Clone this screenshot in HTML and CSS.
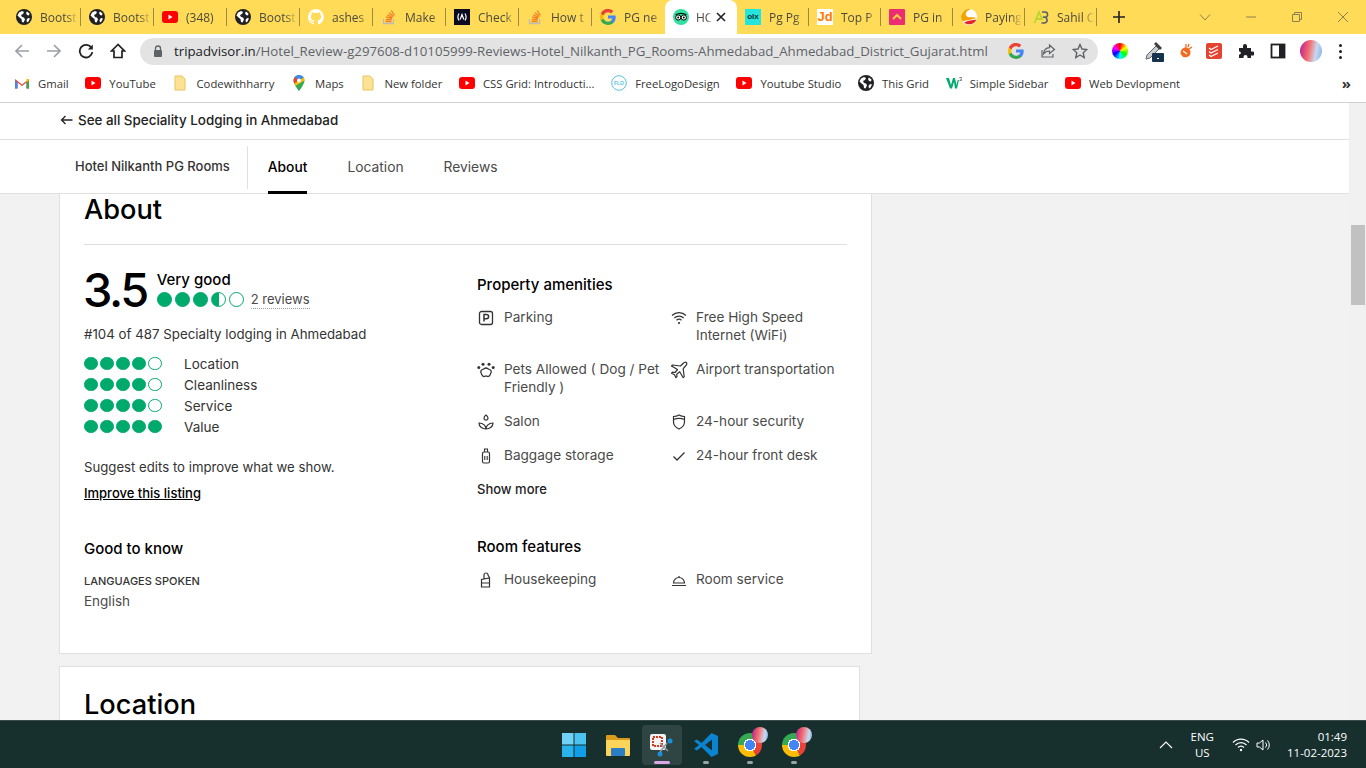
FILE: index.html
```html
<!DOCTYPE html>
<html lang="en">

<head>
    <meta charset="UTF-8">
    <meta name="viewport" content="width=device-width, initial-scale=1.0">
    <title>Hotel Nilkanth PG Rooms</title>
    <link rel="stylesheet" href="styles.css">
</head>

<body>
    <svg class="defs" width="0" height="0">
        <symbol id="globe" viewBox="0 0 16 16">
            <circle cx="8" cy="8" r="8" fill="#202124"/>
            <path d="M3 3.5l3-1.5 2 1-1 2-2 1 1 2 2 .5 1 2-1.500 3-1.500-.5-.5-3-2-1.500-2-2zM11 2.500l2.500 2-.5 2-2-.5-1-2zM12 9l2 .5-1.500 3-1.500 1-.5-2.500z" fill="#fff"/>
        </symbol>
        <symbol id="yt" viewBox="0 0 16 16">
            <rect y="2" width="16" height="12" rx="3" fill="#f00"/>
            <path d="M6.500 5.500v5l4-2.500z" fill="#fff"/>
        </symbol>
        <symbol id="gh" viewBox="0 0 16 16">
            <path d="M8 0a8 8 0 0 0-2.500 15.600c.4.100.5-.2.500-.4v-1.400c-2.200.5-2.700-1-2.700-1-.4-.9-.9-1.200-.9-1.200-.7-.5.100-.5.100-.5.800.1 1.200.8 1.200.8.700 1.200 1.900.9 2.300.7.100-.5.300-.9.500-1.100-1.800-.2-3.600-.9-3.600-4 0-.9.300-1.600.8-2.100-.1-.2-.4-1 .1-2.100 0 0 .7-.2 2.200.8a7.600 7.600 0 0 1 4 0c1.500-1 2.200-.8 2.200-.8.400 1.100.2 1.900.1 2.100.5.600.8 1.300.8 2.100 0 3.100-1.900 3.700-3.700 3.900.3.300.6.800.6 1.500v2.200c0 .2.100.5.600.4A8 8 0 0 0 8 0z" fill="#fff"/>
        </symbol>
        <symbol id="so" viewBox="0 0 16 16">
            <path d="M2.500 10v4.500h10V10" fill="none" stroke="#bcbbbb" stroke-width="1.300"/>
            <path d="M4.500 12.500h6M4.700 10.300l6 .6M5.200 8l5.800 1.500M6.300 5.800l5.200 2.800M8 3.700l4.400 3.900M10.200 1.500l3.200 4.800" stroke="#f48024" stroke-width="1.300" fill="none"/>
        </symbol>
        <symbol id="fcc" viewBox="0 0 16 16">
            <rect width="16" height="16" fill="#0a0a23"/>
            <path d="M5 4.500Q2.800 8 5 11.500M11 4.500Q13.200 8 11 11.500M6.200 10.500L8 5.500l1.800 5" fill="none" stroke="#fff" stroke-width="1.200"/>
        </symbol>
        <symbol id="google" viewBox="0 0 16 16">
            <path d="M15.700 8.200c0-.6-.1-1.100-.2-1.600H8v3h4.300c-.2 1-.8 1.800-1.600 2.400v2h2.600c1.500-1.400 2.400-3.400 2.400-5.800z" fill="#4285f4"/>
            <path d="M8 16c2.200 0 4-.7 5.300-2l-2.600-2c-.7.500-1.600.8-2.700.8-2.100 0-3.900-1.400-4.500-3.300H.8v2.100A8 8 0 0 0 8 16z" fill="#34a853"/>
            <path d="M3.500 9.500a4.800 4.800 0 0 1 0-3V4.400H.8a8 8 0 0 0 0 7.200z" fill="#fbbc05"/>
            <path d="M8 3.200c1.200 0 2.200.4 3.100 1.200l2.300-2.300A8 8 0 0 0 .8 4.400l2.700 2.100C4.100 4.600 5.900 3.200 8 3.200z" fill="#ea4335"/>
        </symbol>
        <symbol id="tripadvisor" viewBox="0 0 16 16">
            <circle cx="8" cy="8" r="8" fill="#34e0a1"/>
            <circle cx="5.200" cy="8.500" r="2.600" fill="#fff" stroke="#000"/>
            <circle cx="10.800" cy="8.500" r="2.600" fill="#fff" stroke="#000"/>
            <circle cx="5.200" cy="8.500" r="1" fill="#000"/>
            <circle cx="10.800" cy="8.500" r="1" fill="#000"/>
            <path d="M2.500 5.500Q8 3 13.500 5.500" fill="none" stroke="#000"/>
        </symbol>
        <symbol id="pgin" viewBox="0 0 16 16">
            <rect width="16" height="16" rx="1" fill="#ee2c74"/>
            <path d="M4 10l4-4 4 4" fill="none" stroke="#ffc83d" stroke-width="2.200"/>
        </symbol>
        <symbol id="sulekha" viewBox="0 0 16 16">
            <circle cx="8" cy="8" r="8" fill="#fff"/>
            <path d="M1.500 12.500A8 8 0 0 1 10 .3C6 1 3 5 6 7.500c2 1.500 6 0 9 1.500-2 1.500-9 2-13.500 3.500z" fill="#f5a300"/>
            <path d="M3 13.500c4-2 8-2.500 12.500-3A8 8 0 0 1 3 13.500z" fill="#e0262c"/>
        </symbol>
        <symbol id="sahil" viewBox="0 0 16 16">
            <path d="M1.500 14L6 3l3 7H4" fill="none" stroke="#b6d72c" stroke-width="1.800"/>
            <path d="M9 3h3a2.500 2.500 0 0 1 0 5.200H10a3 3 0 0 1 2 5.800H8.500" fill="none" stroke="#55606a" stroke-width="1.500"/>
        </symbol>
        <symbol id="folder" viewBox="0 0 16 16">
            <path d="M3 1h7l3 3v11H3z" fill="#fde293" stroke="#e7c560"/>
        </symbol>
        <symbol id="gmail" viewBox="0 0 16 16">
            <path d="M1 13.500V4l7 5.500L15 4v9.500h-2.500V7.500L8 11 3.500 7.500v6z" fill="#ea4335"/>
            <path d="M1 13.500h2.500v-6L1 5.500z" fill="#4285f4"/>
            <path d="M12.500 13.500H15v-8l-2.500 2z" fill="#34a853"/>
            <path d="M12.500 7.500L15 5.500V4l-2.500 0z" fill="#fbbc05"/>
        </symbol>
        <symbol id="maps" viewBox="0 0 16 16">
            <path d="M8 0a5.500 5.500 0 0 0-5.500 5.500C2.500 9.500 8 16 8 16s5.500-6.500 5.500-10.500A5.500 5.500 0 0 0 8 0z" fill="#34a853"/>
            <path d="M8 0a5.500 5.500 0 0 0-4.200 2l4.200 3.500L12.500 2.500A5.500 5.500 0 0 0 8 0z" fill="#4285f4"/>
            <path d="M3.800 2a5.500 5.500 0 0 0-1.300 3.500c0 1 .3 2 .8 3L8 5.500z" fill="#ea4335"/>
            <path d="M13.500 5.500a5.500 5.500 0 0 0-1-3L8 5.500l-4.700 3c.4.800.8 1.500 1.300 2.200z" fill="#fbbc05"/>
            <circle cx="8" cy="5.500" r="2" fill="#fff"/>
        </symbol>
        <symbol id="flo" viewBox="0 0 16 16">
            <circle cx="8" cy="8" r="7.300" fill="#fff" stroke="#53c3d8"/>
            <text x="8" y="9.800" font-size="5" font-weight="700" text-anchor="middle" fill="#53c3d8" font-family="Liberation Sans">FLO</text>
        </symbol>
        <symbol id="w3" viewBox="0 0 16 16">
            <path d="M0 3h3l2 7 2-7h2l1.500 7 1.200-5H13l-2 8.500H9L8 7l-2 6.500H4z" fill="#04aa6d"/>
            <text x="13" y="5.500" font-size="6" fill="#333" font-family="Liberation Sans">3</text>
        </symbol>
        <symbol id="parking" viewBox="0 0 18 18">
            <rect x="2.500" y="2.500" width="13" height="13" rx="2" fill="none" stroke="#333" stroke-width="1.300"/>
            <path d="M7 12.500v-7h2.500a2 2 0 0 1 0 4.200H7" fill="none" stroke="#333" stroke-width="1.500"/>
        </symbol>
        <symbol id="wifi" viewBox="0 0 18 18">
            <path d="M2 6.500a10 10 0 0 1 14 0M4.300 9a7 7 0 0 1 9.400 0M6.500 11.300a3.800 3.800 0 0 1 5 0" fill="none" stroke="#333" stroke-width="1.200"/>
            <circle cx="9" cy="14" r="1.100" fill="#333"/>
        </symbol>
        <symbol id="paw" viewBox="0 0 18 18">
            <path d="M9 7c-1.500 0-2 1-3.500 1.500C3.500 9.200 3.500 11 4.300 12.500c.7 1.300.7 3 2.700 3 .8 0 1.300-.5 2-.5s1.200.5 2 .5c2 0 2-1.700 2.700-3 .8-1.500.8-3.300-1.200-4C11 8 10.500 7 9 7z" fill="none" stroke="#333" stroke-width="1.300"/>
            <circle cx="1.800" cy="6.500" r="1.500" fill="#333"/><circle cx="6" cy="3.300" r="1.500" fill="#333"/>
            <circle cx="12" cy="3.300" r="1.500" fill="#333"/><circle cx="16.200" cy="6.500" r="1.500" fill="#333"/>
        </symbol>
        <symbol id="plane" viewBox="0 0 18 18">
            <path d="M16.500 1.500c-1-.7-2.500 0-3.500 1l-2.500 2.500-8-1-1 1 6 3.500-2.500 3-2.500-.3-1 1 3 1.500 1.500 3 1-1-.3-2.500 3-2.500 3.500 6 1-1-1-8L15.500 5c1-1 1.700-2.500 1-3.500z" fill="none" stroke="#333" stroke-width="1.200" stroke-linejoin="round"/>
        </symbol>
        <symbol id="salon" viewBox="0 0 18 18">
            <path d="M9 2c1.500 1 2 2.200 2 3.200a2 2 0 0 1-4 0C7 4.200 7.500 3 9 2zM9 16c0-3-2.500-6-7-6 0 3.500 3 6 7 6zM9 16c0-3 2.500-6 7-6 0 3.500-3 6-7 6z" fill="none" stroke="#333" stroke-width="1.200"/>
        </symbol>
        <symbol id="shield" viewBox="0 0 18 18">
            <path d="M9 2c2 1.200 4 1.500 5.500 1.500V9c0 3.500-2.500 5.700-5.500 7-3-1.300-5.500-3.500-5.500-7V3.500C5 3.500 7 3.200 9 2zM3.500 6.500C7 5 11 5 14.500 6.500" fill="none" stroke="#333" stroke-width="1.200"/>
        </symbol>
        <symbol id="bag" viewBox="0 0 18 18">
            <rect x="5.500" y="5" width="7" height="11" rx="1.500" fill="none" stroke="#333" stroke-width="1.200"/>
            <path d="M7.500 5V2h3v3M7.800 9v4M10.200 9v4" fill="none" stroke="#333" stroke-width="1.100"/>
        </symbol>
        <symbol id="check" viewBox="0 0 18 18">
            <path d="M3.500 9.500l3.500 3.500 7.500-7.500" fill="none" stroke="#333" stroke-width="1.300"/>
        </symbol>
        <symbol id="housekeeping" viewBox="0 0 18 18">
            <path d="M4.500 16V8.500l8-1.500V16zM4.500 12h8M7 7.500V4a2 2 0 0 1 4 0l1.500 3" fill="none" stroke="#333" stroke-width="1.200"/>
        </symbol>
        <symbol id="cloche" viewBox="0 0 18 18">
            <path d="M2 14.500h14M3.500 12a5.500 5.500 0 0 1 11 0zM9 6.500V5" fill="none" stroke="#333" stroke-width="1.200"/>
        </symbol>
    </svg>

    <div class="tabstrip">
        <div class="tab"><svg class="fav"><use href="#globe"/></svg><span class="tab-title">Bootst</span></div>
        <div class="tab"><svg class="fav"><use href="#globe"/></svg><span class="tab-title">Bootst</span></div>
        <div class="tab"><svg class="fav"><use href="#yt"/></svg><span class="tab-title">(348)</span></div>
        <div class="tab"><svg class="fav"><use href="#globe"/></svg><span class="tab-title">Bootst</span></div>
        <div class="tab"><svg class="fav"><use href="#gh"/></svg><span class="tab-title">ashes</span></div>
        <div class="tab"><svg class="fav"><use href="#so"/></svg><span class="tab-title">Make</span></div>
        <div class="tab"><svg class="fav"><use href="#fcc"/></svg><span class="tab-title">Check</span></div>
        <div class="tab"><svg class="fav"><use href="#so"/></svg><span class="tab-title">How t</span></div>
        <div class="tab tab-last"><svg class="fav"><use href="#google"/></svg><span class="tab-title">PG ne</span></div>
        <div class="tab tab-active"><svg class="fav"><use href="#tripadvisor"/></svg><span class="tab-title">HC</span><svg class="tab-close" width="10" height="10" viewBox="0 0 10 10"><path d="M1 1l8 8M9 1L1 9" stroke="#202124" stroke-width="1.600"/></svg></div>
        <div class="tab"><span class="fav fav-olx">olx</span><span class="tab-title">Pg Pg</span></div>
        <div class="tab"><span class="fav fav-jd">Jd</span><span class="tab-title">Top P</span></div>
        <div class="tab"><svg class="fav"><use href="#pgin"/></svg><span class="tab-title">PG in</span></div>
        <div class="tab"><svg class="fav"><use href="#sulekha"/></svg><span class="tab-title">Paying</span></div>
        <div class="tab"><svg class="fav"><use href="#sahil"/></svg><span class="tab-title">Sahil C</span></div>
        <svg class="new-tab" width="14" height="14" viewBox="0 0 14 14"><path d="M7 1v12M1 7h12" stroke="#202124" stroke-width="1.600"/></svg>
        <div class="win-controls">
            <svg width="12" height="12" viewBox="0 0 12 12"><path d="M1 3.500l5 5.500 5-5.500" fill="none" stroke="#8d8050"/></svg>
            <svg width="12" height="12" viewBox="0 0 12 12"><path d="M1 6h10" stroke="#8d8050"/></svg>
            <svg width="12" height="12" viewBox="0 0 12 12"><path d="M1.500 3.500h7v7h-7zM3.500 3.500v-2h7v7h-2" fill="none" stroke="#8d8050"/></svg>
            <svg width="12" height="12" viewBox="0 0 12 12"><path d="M1 1l10 10M11 1L1 11" stroke="#8d8050"/></svg>
        </div>
    </div>

    <div class="toolbar">
        <svg class="nav-icon" viewBox="0 0 16 16"><path d="M15 8H2M8 2L2 8l6 6" fill="none" stroke="#9aa0a6" stroke-width="1.700"/></svg>
        <svg class="nav-icon" viewBox="0 0 16 16"><path d="M1 8h13M8 2l6 6-6 6" fill="none" stroke="#9aa0a6" stroke-width="1.700"/></svg>
        <svg class="nav-icon" viewBox="0 0 16 16"><path d="M13.500 5A6.300 6.300 0 1 0 14.300 9" fill="none" stroke="#202124" stroke-width="1.800"/><path d="M14.800 1.500v5h-5z" fill="#202124"/></svg>
        <svg class="nav-icon" viewBox="0 0 16 16"><path d="M8 1.500L1.500 8H4v6.500h8V8h2.500z" fill="none" stroke="#202124" stroke-width="1.700"/></svg>
        <div class="omnibox">
            <svg class="lock" width="10" height="12" viewBox="0 0 10 12"><path d="M2.500 5V3.500a2.500 2.500 0 0 1 5 0V5" fill="none" stroke="#5f6368" stroke-width="1.300"/><rect x="1" y="5" width="8" height="7" rx="1" fill="#5f6368"/></svg>
            <span class="url"><span class="url-host">tripadvisor.in</span>/Hotel_Review-g297608-d10105999-Reviews-Hotel_Nilkanth_PG_Rooms-Ahmedabad_Ahmedabad_District_Gujarat.html</span>
            <svg class="omni-icon" viewBox="0 0 16 16"><use href="#google"/></svg>
            <svg class="omni-icon" viewBox="0 0 16 16"><path d="M2 7v7h11v-3M9.500 2l5 4.500-5 4V8C6.500 8 5 9 3.500 11c.3-3.500 2.500-6 6-6.300z" fill="none" stroke="#5f6368" stroke-width="1.200"/></svg>
            <svg class="omni-icon" viewBox="0 0 16 16"><path d="M8 1.500l2 4.500 4.800.5-3.600 3.200 1 4.800L8 12l-4.200 2.500 1-4.800L1.200 6.500 6 6z" fill="none" stroke="#5f6368" stroke-width="1.400"/></svg>
        </div>
        <div class="extensions">
            <span class="ext-wheel"></span>
            <svg class="ext-icon ext-dropper" viewBox="0 0 20 22"><path d="M3 15L12 6l3 3-9 9-4 1z" fill="#c9ced3" stroke="#5f6368"/><path d="M12 2l6 6-2 2-6-6z" fill="#3c4043"/><rect x="8" y="13" width="12" height="9" rx="1" fill="#17324d"/><rect x="13" y="18" width="2" height="1" fill="#fff"/></svg>
            <svg class="ext-icon ext-orange" viewBox="0 0 16 16"><path d="M6.500 4.500c3-1 6 2 6 5a5 5 0 0 1-9.500 2C1.500 8.500 4 5.500 6.500 4.500z" fill="#f26a21"/><path d="M8 1v3M11 1l-1 3M14 4l-3 2" stroke="#f26a21" stroke-width="1.300"/><path d="M5 8l4 3" stroke="#fff" stroke-width="1.200"/></svg>
            <svg class="ext-icon" viewBox="0 0 16 16"><rect width="16" height="16" rx="2" fill="#e44332"/><path d="M3 5l2 1.500 7-3.500M3 8.500l2 1.500 7-3.500M3 12l2 1.500 7-3.500" fill="none" stroke="#fff" stroke-width="1.100"/></svg>
            <svg class="ext-icon" viewBox="0 0 16 16"><path d="M1 5h4V3a2 2 0 0 1 4 0v2h4v3.500h1.500a2 2 0 0 1 0 4H13V15H9.500v-1a2 2 0 0 0-4 0v1H1v-3.500h1a2 2 0 0 0 0-3H1z" fill="#202124"/></svg>
            <svg class="ext-icon" viewBox="0 0 16 16"><rect x="1.500" y="1.500" width="13" height="13" fill="none" stroke="#202124" stroke-width="1.800"/><rect x="9" y="1.500" width="5.500" height="13" fill="#202124"/></svg>
            <span class="avatar"></span>
            <span class="kebab"><i></i><i></i><i></i></span>
        </div>
    </div>

    <div class="bookmarks">
        <a class="bm"><svg class="fav"><use href="#gmail"/></svg>Gmail</a>
        <a class="bm"><svg class="fav"><use href="#yt"/></svg>YouTube</a>
        <a class="bm"><svg class="fav"><use href="#folder"/></svg>Codewithharry</a>
        <a class="bm"><svg class="fav"><use href="#maps"/></svg>Maps</a>
        <a class="bm"><svg class="fav"><use href="#folder"/></svg>New folder</a>
        <a class="bm"><svg class="fav"><use href="#yt"/></svg>CSS Grid: Introducti...</a>
        <a class="bm"><svg class="fav"><use href="#flo"/></svg>FreeLogoDesign</a>
        <a class="bm"><svg class="fav"><use href="#yt"/></svg>Youtube Studio</a>
        <a class="bm"><svg class="fav"><use href="#globe"/></svg>This Grid</a>
        <a class="bm"><svg class="fav"><use href="#w3"/></svg>Simple Sidebar</a>
        <a class="bm"><svg class="fav"><use href="#yt"/></svg>Web Devlopment</a>
        <span class="bm-more">»</span>
    </div>

    <div class="viewport">
        <div class="page">
            <header class="site-head">
                <div class="crumb">
                    <svg width="13" height="10" viewBox="0 0 13 10"><path d="M12.500 5H1.500M5.500 1l-4 4 4 4" fill="none" stroke="#222" stroke-width="1.300"/></svg>
                    <span>See all Speciality Lodging in Ahmedabad</span>
                </div>
                <nav class="subnav">
                    <div class="subnav-name">Hotel Nilkanth PG Rooms</div>
                    <a class="subnav-link subnav-on">About</a>
                    <a class="subnav-link">Location</a>
                    <a class="subnav-link">Reviews</a>
                </nav>
            </header>

            <section class="card card-about">
                <h2 class="card-title">About</h2>
                <div class="about-cols">
                    <div class="about-left">
                        <div class="score-row">
                            <div class="score">3.5</div>
                            <div>
                                <div class="score-word">Very good</div>
                                <div class="score-meta">
                                    <span class="bubbles bubbles-big"><i></i><i></i><i></i><i class="half"></i><i class="empty"></i></span>
                                    <span class="review-link">2 reviews</span>
                                </div>
                            </div>
                        </div>
                        <p class="rank">#104 of 487 Specialty lodging in Ahmedabad</p>
                        <ul class="ratings">
                            <li><span class="bubbles"><i></i><i></i><i></i><i></i><i class="empty"></i></span>Location</li>
                            <li><span class="bubbles"><i></i><i></i><i></i><i></i><i class="empty"></i></span>Cleanliness</li>
                            <li><span class="bubbles"><i></i><i></i><i></i><i></i><i class="empty"></i></span>Service</li>
                            <li><span class="bubbles"><i></i><i></i><i></i><i></i><i></i></span>Value</li>
                        </ul>
                        <p class="suggest">Suggest edits to improve what we show.</p>
                        <a class="improve">Improve this listing</a>
                        <h3 class="sub-title know-title">Good to know</h3>
                        <div class="lang-label">LANGUAGES SPOKEN</div>
                        <div class="lang">English</div>
                    </div>
                    <div class="about-right">
                        <h3 class="sub-title">Property amenities</h3>
                        <div class="amenities">
                            <div class="amenity"><svg class="am-icon"><use href="#parking"/></svg>Parking</div>
                            <div class="amenity"><svg class="am-icon"><use href="#wifi"/></svg>Free High Speed Internet (WiFi)</div>
                            <div class="amenity"><svg class="am-icon"><use href="#paw"/></svg>Pets Allowed ( Dog / Pet Friendly )</div>
                            <div class="amenity"><svg class="am-icon"><use href="#plane"/></svg>Airport transportation</div>
                            <div class="amenity"><svg class="am-icon"><use href="#salon"/></svg>Salon</div>
                            <div class="amenity"><svg class="am-icon"><use href="#shield"/></svg>24-hour security</div>
                            <div class="amenity"><svg class="am-icon"><use href="#bag"/></svg>Baggage storage</div>
                            <div class="amenity"><svg class="am-icon"><use href="#check"/></svg>24-hour front desk</div>
                        </div>
                        <a class="show-more">Show more</a>
                        <h3 class="sub-title room-title">Room features</h3>
                        <div class="amenities">
                            <div class="amenity"><svg class="am-icon"><use href="#housekeeping"/></svg>Housekeeping</div>
                            <div class="amenity"><svg class="am-icon"><use href="#cloche"/></svg>Room service</div>
                        </div>
                    </div>
                </div>
            </section>

            <section class="card card-location">
                <h2 class="card-title">Location</h2>
            </section>
        </div>
        <div class="scrollbar"><div class="scroll-thumb"></div></div>
    </div>

    <footer class="taskbar">
        <div class="task-icons">
            <span class="task-btn">
                <svg width="24" height="24" viewBox="0 0 24 24"><rect width="11.500" height="11.500" fill="#6fd3f7"/><rect x="12.500" width="11.500" height="11.500" fill="#4cc2f1"/><rect y="12.500" width="11.500" height="11.500" fill="#2ab2ec"/><rect x="12.500" y="12.500" width="11.500" height="11.500" fill="#109fe6"/></svg>
            </span>
            <span class="task-btn">
                <svg width="24" height="22" viewBox="0 0 24 22"><path d="M0 2a1 1 0 0 1 1-1h8l3 3h11a1 1 0 0 1 1 1v3H0z" fill="#d99b1c"/><path d="M0 6h24v15a1 1 0 0 1-1 1H1a1 1 0 0 1-1-1z" fill="#fdd45b"/><rect x="5" y="14" width="14" height="8" rx="1" fill="#2a7fc4"/></svg>
            </span>
            <span class="task-btn task-active">
                <svg width="24" height="24" viewBox="0 0 24 24"><rect x="0" y="1" width="16" height="16" rx="2" fill="#f3f3f3"/><rect x="3" y="4" width="9" height="9" fill="none" stroke="#d8371f" stroke-width="2" stroke-dasharray="2 1"/><path d="M10 10l8 8M17 10l-7 9" stroke="#8f9aa1" stroke-width="1.500"/><circle cx="20" cy="8" r="2.500" fill="#1d8fd8"/><circle cx="10" cy="21" r="2.500" fill="#1d8fd8"/></svg>
            </span>
            <span class="task-btn task-open">
                <svg width="24" height="24" viewBox="0 0 24 24"><path d="M17.500 0L7.500 10 3 6.500 0 8l5 4-5 4 3 1.500L7.500 14l10 10 6.500-3V3z" fill="#0a84d0"/><path d="M18 6.500L11 12l7 5.500z" fill="#17302d"/></svg>
            </span>
            <span class="task-btn task-open"><span class="chrome"><span class="chrome-badge"></span></span></span>
            <span class="task-btn task-open"><span class="chrome"><span class="chrome-badge"></span></span></span>
        </div>
        <div class="tray">
            <svg width="14" height="8" viewBox="0 0 14 8"><path d="M1 7l6-6 6 6" fill="none" stroke="#fff" stroke-width="1.100"/></svg>
            <div class="tray-lang">ENG<br>US</div>
            <svg width="18" height="14" viewBox="0 0 18 14"><path d="M1 4.500a11 11 0 0 1 16 0M3.500 7a7.500 7.500 0 0 1 11 0M6 9.500a4 4 0 0 1 6 0" fill="none" stroke="#fff" stroke-width="1.200"/><circle cx="9" cy="12" r="1.200" fill="#fff"/></svg>
            <svg width="16" height="14" viewBox="0 0 16 14"><path d="M1 5h2.500L7 2v10L3.500 9H1zM9.500 4.500a3.500 3.500 0 0 1 0 5M11.500 2.500a6.500 6.500 0 0 1 0 9" fill="none" stroke="#fff"/></svg>
            <div class="tray-clock">01:49<br>11-02-2023</div>
        </div>
    </footer>
</body>

</html>
```

FILE: styles.css
```css
html, body {
    margin: 0;
    padding: 0;
    height: 100%;
    overflow: hidden;
}

body {
    display: flex;
    flex-direction: column;
    font-family: "Inter", "Open Sans", sans-serif;
    background-color: #f2f2f2;
    color: #333;
}

.defs {
    display: none;
}

.fav {
    flex: none;
    width: 16px;
    height: 16px;
}

/* browser tabs */
.tabstrip {
    display: flex;
    align-items: center;
    height: 34px;
    flex: none;
    padding-left: 8px;
    background-color: #ffdb58;
}

.tab {
    display: flex;
    align-items: center;
    gap: 8px;
    width: 73px;
    height: 18px;
    box-sizing: border-box;
    padding-left: 8px;
    padding-right: 2px;
    border-right: 1px solid #9a8a45;
    font-family: "Open Sans", sans-serif;
    font-size: 12px;
    color: #4c4a3f;
}

.tab-last {
    border-right: none;
}

.tab-title {
    flex: 1;
    overflow: hidden;
    white-space: nowrap;
    -webkit-mask-image: linear-gradient(to right, #000 70%, transparent);
    mask-image: linear-gradient(to right, #000 70%, transparent);
}

.tab-active,
.tab-active ~ .tab {
    width: 72px;
}

.tab-active {
    gap: 4px;
    height: 34px;
    border-right: none;
    border-radius: 8px 8px 0 0;
    background-color: #fff;
}

.tab-active .fav {
    margin-right: 3px;
}

.tab-close {
    flex: none;
    margin-right: 9px;
}

.fav-olx {
    background-color: #23e5db;
    color: #002f34;
    font: 700 8px/16px "Liberation Sans", sans-serif;
    text-align: center;
}

.fav-jd {
    background-color: #fff;
    color: #ff7a00;
    font: 700 13px/16px "Liberation Sans", sans-serif;
    text-align: center;
}

.new-tab {
    margin-left: 15px;
}

.win-controls {
    display: flex;
    gap: 34px;
    align-items: center;
    margin-left: auto;
    padding-right: 17px;
}

/* address bar */
.toolbar {
    display: flex;
    align-items: center;
    flex: none;
    height: 34px;
    padding-left: 14px;
    background-color: #fff;
}

.nav-icon {
    width: 16px;
    height: 16px;
    margin-right: 16px;
}

.omnibox {
    display: flex;
    align-items: center;
    width: 958px;
    height: 27px;
    margin-left: -2px;
    box-sizing: border-box;
    padding-left: 13px;
    padding-right: 10px;
    border-radius: 14px;
    background-color: #e3e3e3;
    font-family: "Open Sans", sans-serif;
    font-size: 13.25px;
    color: #5f6368;
}

.lock {
    margin-right: 11px;
}

.url {
    flex: 1;
    white-space: nowrap;
    overflow: hidden;
}

.url-host {
    color: #202124;
}

.omni-icon {
    flex: none;
    width: 16px;
    height: 16px;
    margin-left: 16px;
}

.extensions {
    display: flex;
    align-items: center;
    margin-left: 14px;
    gap: 16px;
}

.ext-wheel {
    width: 16px;
    height: 16px;
    border-radius: 50%;
    background: conic-gradient(#f00, #ff0, #0f0, #0ff, #00f, #f0f, #f00);
}

.ext-icon {
    width: 16px;
    height: 16px;
}

.ext-dropper {
    width: 20px;
    height: 22px;
    margin-right: -2px;
}

.ext-orange {
    margin-right: -4px;
}

.avatar {
    width: 22px;
    height: 22px;
    margin-left: -2px;
    margin-right: -2px;
    border-radius: 50%;
    background: linear-gradient(100deg, #c22f8f 10%, #f56b6b 40%, #c9d8f0 70%, #7fb0e8);
}

.kebab {
    display: flex;
    flex-direction: column;
    gap: 3px;
    margin-left: 3px;
}

.kebab i {
    width: 3px;
    height: 3px;
    border-radius: 50%;
    background-color: #202124;
}

/* bookmarks */
.bookmarks {
    display: flex;
    align-items: center;
    flex: none;
    height: 34px;
    padding-left: 14px;
    padding-right: 15px;
    background-color: #fff;
    border-bottom: 1px solid #d0d0d0;
    font-family: "Open Sans", sans-serif;
    font-size: 11.3px;
    color: #333;
}

.bm {
    display: flex;
    align-items: center;
    gap: 8px;
    margin-right: 16.7px;
    margin-top: -4px;
    white-space: nowrap;
}

.bm-more {
    margin-left: auto;
    font-size: 15px;
    font-weight: 700;
    margin-top: -4px;
}

/* page */
.viewport {
    flex: 1;
    display: flex;
    min-height: 0;
    overflow: hidden;
}

.page {
    flex: 1;
    min-width: 0;
}

.scrollbar {
    flex: none;
    width: 17px;
    background-color: #f1f1f1;
}

.scroll-thumb {
    width: 14px;
    height: 80px;
    margin-top: 122px;
    margin-left: 2px;
    background-color: #c1c1c1;
}

.site-head {
    background-color: #fff;
    border-bottom: 1px solid #e0e0e0;
}

.crumb {
    display: flex;
    align-items: center;
    gap: 5px;
    height: 34px;
    padding-bottom: 2px;
    padding-left: 60px;
    border-bottom: 1px solid #e0e0e0;
    font-size: 13.4px;
    font-weight: 500;
    color: #222;
}

.subnav {
    display: flex;
    height: 53px;
    padding-left: 75px;
}

.subnav-name {
    display: flex;
    align-items: center;
    height: 39px;
    padding-bottom: 4px;
    margin-top: 6px;
    padding-right: 17px;
    border-right: 1px solid #e0e0e0;
    font-size: 13px;
    font-weight: 500;
    color: #333;
}

.subnav-link {
    display: flex;
    align-items: center;
    margin-left: 20px;
    margin-right: 20px;
    margin-bottom: -1px;
    box-sizing: border-box;
    padding-top: 2px;
    border-bottom: 3px solid transparent;
    font-size: 13.8px;
    color: #4a4a4a;
}

.subnav-on {
    color: #000;
    font-weight: 500;
    border-bottom-color: #000;
}

.card {
    box-sizing: border-box;
    background-color: #fff;
    border: 1px solid #e0e0e0;
    border-top: none;
}

.card-about {
    width: 813px;
    height: 460px;
    margin-left: 59px;
    padding: 0 24px;
}

.card-location {
    width: 801px;
    height: 100px;
    margin-top: 12px;
    margin-left: 59px;
    padding: 0 24px;
    border-top: 1px solid #e0e0e0;
}

.card-title {
    margin: 0;
    height: 50px;
    font-size: 27.2px;
    line-height: 32px;
    font-weight: 500;
    color: #000;
}

.card-about .card-title {
    border-bottom: 1px solid #e0e0e0;
}

.card-location .card-title {
    padding-top: 22px;
}

.about-cols {
    display: grid;
    grid-template-columns: 393px 1fr;
}

.score-row {
    display: flex;
    gap: 10px;
    margin-top: 18px;
}

.score {
    margin-left: -1px;
    font-size: 47px;
    line-height: 54px;
    font-weight: 500;
    letter-spacing: -2.5px;
    color: #000;
}

.score-word {
    margin-top: 7px;
    font-size: 15px;
    line-height: 20px;
    font-weight: 500;
    color: #000;
}

.score-meta {
    display: flex;
    align-items: center;
    gap: 7px;
}

.bubbles {
    display: inline-flex;
    gap: 2.500px;
}

.bubbles i {
    box-sizing: border-box;
    width: 13.500px;
    height: 13.500px;
    border-radius: 50%;
    background-color: #00aa6c;
    border: 1.500px solid #00aa6c;
}

.bubbles-big {
    gap: 3px;
}

.bubbles-big i {
    width: 15px;
    height: 15px;
}

.bubbles .empty {
    background-color: #fff;
}

.bubbles .half {
    background: linear-gradient(to right, #00aa6c 50%, #fff 50%);
}

.review-link {
    font-size: 13px;
    line-height: 18px;
    color: #4a4a4a;
    border-bottom: 1px dotted #999;
}

.rank {
    margin: 7px 0 0;
    font-size: 13.3px;
    line-height: 20px;
}

.ratings {
    list-style: none;
    margin: 9px 0 0;
    padding: 0;
}

.ratings li {
    display: flex;
    align-items: center;
    height: 21px;
    font-size: 13.5px;
    color: #333;
}

.ratings .bubbles {
    width: 100px;
}

.suggest {
    margin: 20px 0 0;
    font-size: 13.2px;
    line-height: 20px;
}

.improve {
    display: block;
    margin-top: 6px;
    font-size: 13px;
    line-height: 20px;
    font-weight: 500;
    color: #000;
    text-decoration: underline;
}

.sub-title {
    margin: 0;
    font-size: 15px;
    line-height: 20px;
    font-weight: 500;
    color: #000;
}

.know-title {
    margin-top: 36px;
}

.lang-label {
    margin-top: 14px;
    font-size: 11px;
    line-height: 16px;
    font-weight: 500;
    color: #333;
}

.lang {
    margin-top: 2px;
    font-size: 13.5px;
    line-height: 20px;
    color: #4a4a4a;
}

.about-right .sub-title:first-child {
    margin-top: 30px;
}

.amenities {
    display: grid;
    grid-template-columns: 193px 1fr;
    margin-top: 13px;
    row-gap: 16px;
}

.amenity {
    position: relative;
    padding-left: 27px;
    font-size: 13.6px;
    line-height: 18px;
    color: #4a4a4a;
}

.am-icon {
    position: absolute;
    left: 0;
    top: 1px;
    width: 18px;
    height: 18px;
}

.amenity:nth-child(even) {
    padding-left: 26px;
}

.show-more {
    display: block;
    margin-top: 15px;
    font-size: 13px;
    line-height: 20px;
    font-weight: 500;
    color: #222;
}

.room-title {
    margin-top: 38px;
}

/* windows taskbar */
.taskbar {
    display: flex;
    align-items: center;
    position: relative;
    flex: none;
    height: 48px;
    box-sizing: border-box;
    border-top: 1px solid #3a4a48;
    background-color: #17302d;
    color: #fff;
    font-family: "Open Sans", sans-serif;
    font-size: 11.500px;
}

.task-icons {
    display: flex;
    margin-left: 554px;
    gap: 4px;
}

.task-btn {
    position: relative;
    display: flex;
    align-items: center;
    justify-content: center;
    width: 40px;
    height: 40px;
    border-radius: 4px;
}

.task-active {
    background-color: #2e4543;
}

.task-active::after,
.task-open::after {
    content: "";
    position: absolute;
    bottom: 1px;
    left: 50%;
    width: 6px;
    height: 3px;
    margin-left: -3px;
    border-radius: 2px;
    background-color: #9aa5a3;
}

.task-active::after {
    width: 16px;
    margin-left: -8px;
    background-color: #dba6e6;
}

.chrome {
    position: relative;
    width: 24px;
    height: 24px;
    border-radius: 50%;
    background: radial-gradient(circle, #4285f4 0 5px, #fff 5px 6.500px, transparent 6.500px),
        conic-gradient(from 30deg, #ea4335 0 120deg, #fbbc05 120deg 240deg, #34a853 240deg);
}

.chrome-badge {
    position: absolute;
    top: -6px;
    right: -6px;
    width: 16px;
    height: 16px;
    border-radius: 50%;
    background: linear-gradient(100deg, #c22f8f 10%, #f56b6b 40%, #c9d8f0 75%, #7fb0e8);
}

.tray {
    display: flex;
    align-items: center;
    margin-left: auto;
    padding-right: 19px;
}

.tray-lang {
    margin-left: 18px;
    margin-right: 18px;
    line-height: 16px;
    text-align: center;
}

.tray svg + svg {
    margin-left: 6px;
}

.tray-clock {
    margin-left: 15px;
    line-height: 16px;
    text-align: right;
}
```
